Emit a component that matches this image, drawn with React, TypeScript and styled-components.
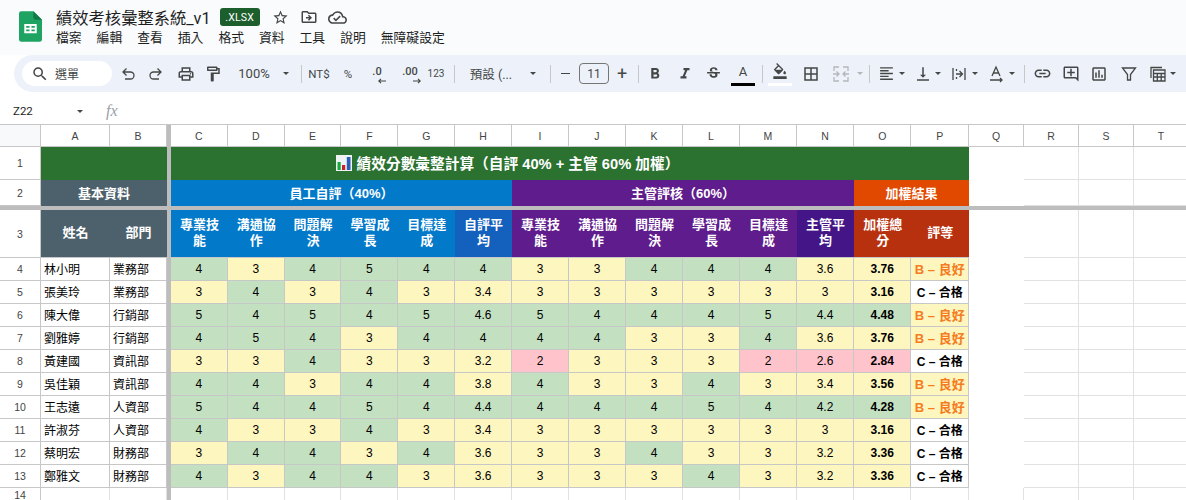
import styled, { createGlobalStyle } from 'styled-components';
import {
  MdBorderAll,
  MdFormatAlignLeft,
  MdFormatBold,
  MdFormatItalic,
  MdLink,
  MdOutlineAddComment,
  MdOutlineCloudDone,
  MdOutlineDriveFileMove,
  MdOutlineFormatColorFill,
  MdOutlineFormatPaint,
  MdOutlineInsertChart,
  MdOutlinePrint,
  MdSearch,
  MdStarBorder,
  MdStrikethroughS,
  MdVerticalAlignBottom,
} from 'react-icons/md';

const SANS = `'Liberation Sans', 'Noto Sans CJK TC', sans-serif`;

const menus = ['檔案', '編輯', '查看', '插入', '格式', '資料', '工具', '說明', '無障礙設定'];
const columns = 'ABCDEFGHIJKLMNOPQRST'.split('');
const subHeads = ['專業技能', '溝通協作', '問題解決', '學習成長', '目標達成'];
const blanks = [20, 21, 22, 23];

type Row = [string, string, number[], number[], number, boolean];

const rows: Row[] = [
  ['林小明', '業務部', [4, 3, 4, 5, 4, 4], [3, 3, 4, 4, 4, 3.6], 3.76, true],
  ['張美玲', '業務部', [3, 4, 3, 4, 3, 3.4], [3, 3, 3, 3, 3, 3], 3.16, false],
  ['陳大偉', '行銷部', [5, 4, 5, 4, 5, 4.6], [5, 4, 4, 4, 5, 4.4], 4.48, true],
  ['劉雅婷', '行銷部', [4, 5, 4, 3, 4, 4], [4, 4, 3, 3, 4, 3.6], 3.76, true],
  ['黃建國', '資訊部', [3, 3, 4, 3, 3, 3.2], [2, 3, 3, 3, 2, 2.6], 2.84, false],
  ['吳佳穎', '資訊部', [4, 4, 3, 4, 4, 3.8], [4, 3, 3, 4, 3, 3.4], 3.56, true],
  ['王志遠', '人資部', [5, 4, 4, 5, 4, 4.4], [4, 4, 4, 5, 4, 4.2], 4.28, true],
  ['許淑芬', '人資部', [4, 3, 3, 4, 3, 3.4], [3, 3, 3, 3, 3, 3], 3.16, false],
  ['蔡明宏', '財務部', [3, 4, 4, 3, 4, 3.6], [3, 3, 4, 3, 3, 3.2], 3.36, false],
  ['鄭雅文', '財務部', [4, 3, 4, 4, 3, 3.6], [3, 3, 3, 4, 3, 3.2], 3.36, false],
];

const scoreColor = (v: number) => (v >= 4 ? '#c3e0c1' : v >= 3 ? '#fdf6bf' : '#fec3cb');

const App = (): JSX.Element => {
  return (
    <Page>
      <GlobalStyle />
      <TopBar>
        <Logo viewBox="0 0 24 32">
          <path d="M2.5 0H15l9 9v20.5a2.5 2.5 0 0 1-2.5 2.5h-19A2.5 2.5 0 0 1 0 29.5V2.5A2.5 2.5 0 0 1 2.5 0z" fill="#1ea362" />
          <path d="M15 0l9 9h-6.500A2.500 2.500 0 0 1 15 6.500z" fill="#137a45" />
          <path d="M5.500 13.500h13v9.500h-13zm2 2v1.800h3.500v-1.800zm5.500 0v1.800h3.500v-1.800zm-5.500 3.700V21h3.500v-1.800zm5.500 0V21h3.500v-1.800z" fill="#fff" fillRule="evenodd" />
        </Logo>
        <TitleBlock>
          <TitleRow>
            <DocTitle>績效考核彙整系統_v1</DocTitle>
            <Badge>.XLSX</Badge>
            <TitleIcon $ml={12}><MdStarBorder size={17} /></TitleIcon>
            <TitleIcon $ml={11}><MdOutlineDriveFileMove size={18} /></TitleIcon>
            <TitleIcon $ml={10}><MdOutlineCloudDone size={19} /></TitleIcon>
          </TitleRow>
          <MenuRow>
            {menus.map((m) => (
              <MenuItem key={m}>{m}</MenuItem>
            ))}
          </MenuRow>
        </TitleBlock>
      </TopBar>

      <Toolbar>
        <SearchPill>
          <MdSearch size={18} />
          <span>選單</span>
        </SearchPill>
        <Tool $w={24} $ml={4}>
          <LineIcon viewBox="0 0 18 18">
            <path d="M7.500 3.500L4 7l3.500 3.500M4 7h7.500a3.500 3.500 0 0 1 0 7H6" />
          </LineIcon>
        </Tool>
        <Tool $w={24} $ml={4}>
          <LineIcon viewBox="0 0 18 18">
            <path d="M10.500 3.500L14 7l-3.500 3.500M14 7H6.500a3.500 3.500 0 0 0 0 7H12" />
          </LineIcon>
        </Tool>
        <Tool $w={24} $ml={6}><MdOutlinePrint size={18} /></Tool>
        <Tool $w={24} $ml={3}><MdOutlineFormatPaint size={18} /></Tool>
        <ToolText $w={34} $ml={12} $size={13}>100%</ToolText>
        <Caret $ml={12} />
        <Divider $ml={12} />
        <ToolText $w={24} $ml={5} $size={11.500}>NT$</ToolText>
        <ToolText $w={16} $ml={9} $size={11.500}>%</ToolText>
        <Decimal $w={20} $ml={12}>
          <DecimalText>.0</DecimalText>
          <ArrowIcon viewBox="0 0 8 6">
            <path d="M8 3H1M3 .8L.8 3 3 5.200" />
          </ArrowIcon>
        </Decimal>
        <Decimal $w={24} $ml={11}>
          <DecimalText>.00</DecimalText>
          <ArrowIcon viewBox="0 0 8 6">
            <path d="M0 3h7M5 .8L7.200 3 5 5.200" />
          </ArrowIcon>
        </Decimal>
        <ToolText $w={18} $ml={4} $size={10}>123</ToolText>
        <Divider $ml={9} />
        <ToolText $w={44} $ml={14} $size={12.500}>預設 (...</ToolText>
        <Caret $ml={17} />
        <Divider $ml={14} />
        <Tool $w={16} $ml={6}><Dash /></Tool>
        <SizeBox>11</SizeBox>
        <ToolText $w={16} $ml={5} $size={18}>+</ToolText>
        <Divider $ml={8} />
        <Tool $w={24} $ml={4}><MdFormatBold size={18} /></Tool>
        <Tool $w={24} $ml={6}><MdFormatItalic size={18} /></Tool>
        <Tool $w={24} $ml={4}><MdStrikethroughS size={17} /></Tool>
        <ColorTool $ml={6} $bar="#000">
          <ColorLetter>A</ColorLetter>
        </ColorTool>
        <Divider $ml={7} />
        <ColorTool $ml={5} $bar="#fff">
          <MdOutlineFormatColorFill size={16} />
        </ColorTool>
        <Tool $w={24} $ml={7}><MdBorderAll size={18} /></Tool>
        <Tool $w={24} $ml={6}>
          <MergeIcon viewBox="0 0 18 18">
            <path d="M7 2H2v4M2 12v4h5M11 2h5v4M16 12v4h-5M1 9h5M12 9h5M4.500 6.500L7 9l-2.500 2.500M13.500 6.500L11 9l2.500 2.500" />
          </MergeIcon>
        </Tool>
        <Caret $ml={4} $muted />
        <Divider $ml={6} />
        <Tool $w={20} $ml={6}><MdFormatAlignLeft size={17} /></Tool>
        <Caret $ml={3} />
        <Tool $w={20} $ml={8}><MdVerticalAlignBottom size={18} /></Tool>
        <Caret $ml={2} />
        <Tool $w={20} $ml={8}>
          <LineIcon viewBox="0 0 18 18">
            <path d="M3 3v12M15 3v12M6 9h6M9.500 6L12.500 9l-3 3M6.500 4v2M6.500 12v2" />
          </LineIcon>
        </Tool>
        <Caret $ml={3} />
        <Tool $w={20} $ml={8}>
          <LineIcon viewBox="0 0 18 18">
            <path d="M5 11l4-9 4 9M6.300 8h5.400M3 15h12M13 13l2 2-2 2" />
          </LineIcon>
        </Tool>
        <Caret $ml={3} />
        <Divider $ml={9} />
        <Tool $w={24} $ml={5}><MdLink size={19} /></Tool>
        <Tool $w={24} $ml={5}><MdOutlineAddComment size={18} /></Tool>
        <Tool $w={24} $ml={4}><MdOutlineInsertChart size={18} /></Tool>
        <Tool $w={24} $ml={6}>
          <LineIcon viewBox="0 0 18 18">
            <path d="M2.500 3h13L10.500 9.500V15h-3V9.500z" />
          </LineIcon>
        </Tool>
        <Tool $w={20} $ml={7}>
          <LineIcon viewBox="0 0 18 18">
            <path d="M2 13V2.500h11M4.500 5h11.500v11H4.500zM4.500 8.500h11.500M4.500 12h11.500M8.300 8.500V16M12.200 8.500V16" />
          </LineIcon>
        </Tool>
        <Caret $ml={2} />
      </Toolbar>

      <FormulaBar>
        <NameBox>Z22</NameBox>
        <NameCaret />
        <Fx>fx</Fx>
      </FormulaBar>

      <Sheet>
        <FreezeCol />
        <FreezeRow />

        <Corner />
        {columns.map((c, i) => (
          <ColHead key={c} $col={i < 2 ? i + 2 : i + 3}>{c}</ColHead>
        ))}

        <RowHead>1</RowHead>
        <Banner>
          <ChartEmoji viewBox="0 0 16 16">
            <rect width="16" height="16" fill="#eef2f5" />
            <rect x="1.500" y="7" width="3.200" height="8" fill="#17a83a" />
            <rect x="6" y="10" width="3.200" height="5" fill="#c8202b" />
            <rect x="10.800" y="2" width="3.700" height="13" fill="#2a5fb5" />
          </ChartEmoji>
          績效分數彙整計算（自評 40% + 主管 60% 加權）
        </Banner>
        {blanks.map((c) => <Blank key={c} $col={c} />)}

        <RowHead>2</RowHead>
        <GroupHead $from={2} $span={2} $bg="#4d616c">基本資料</GroupHead>
        <GroupHead $from={5} $span={6} $bg="#0279c9">員工自評（40%）</GroupHead>
        <GroupHead $from={11} $span={6} $bg="#5f1c8c">主管評核（60%）</GroupHead>
        <GroupHead $from={17} $span={2} $bg="#e24900">加權結果</GroupHead>
        {blanks.map((c) => <Blank key={c} $col={c} />)}

        <RowHead $row={5}>3</RowHead>
        <SubHead $col={2} $bg="#4d616c">姓名</SubHead>
        <SubHead $col={3} $bg="#4d616c">部門</SubHead>
        {subHeads.map((h, i) => (
          <SubHead key={`self-${h}`} $col={5 + i} $bg="#0279c9">{h}</SubHead>
        ))}
        <SubHead $col={10} $bg="#1360bd">自評平均</SubHead>
        {subHeads.map((h, i) => (
          <SubHead key={`boss-${h}`} $col={11 + i} $bg="#5f1c8c">{h}</SubHead>
        ))}
        <SubHead $col={16} $bg="#431586">主管平均</SubHead>
        <SubHead $col={17} $bg="#b7310f">加權總分</SubHead>
        <SubHead $col={18} $bg="#b7310f">評等</SubHead>
        {blanks.map((c) => <Blank key={c} $col={c} />)}

        {rows.map((r, i) => (
          <DataRow key={r[0]} row={r} num={i + 4} />
        ))}

        <LastRowHead>14</LastRowHead>
        {Array.from({ length: 22 }, (_, i) => i + 2)
          .filter((c) => c !== 4)
          .map((c) => (
            <LastBlank key={c} $col={c} />
          ))}
      </Sheet>
    </Page>
  );
};

const DataRow = ({ row, num }: { row: Row; num: number }): JSX.Element => {
  const [name, dept, self, boss, total, good] = row;
  return (
    <>
      <RowHead>{num}</RowHead>
      <TextCell $col={2}>{name}</TextCell>
      <TextCell $col={3}>{dept}</TextCell>
      {self.map((v, i) => (
        <ScoreCell key={`s${i}`} $col={5 + i} $bg={scoreColor(v)}>{v}</ScoreCell>
      ))}
      {boss.map((v, i) => (
        <ScoreCell key={`b${i}`} $col={11 + i} $bg={scoreColor(v)}>{v}</ScoreCell>
      ))}
      <ScoreCell $col={17} $bg={scoreColor(total)} $bold>{total.toFixed(2)}</ScoreCell>
      <GradeCell $good={good}>{good ? 'B – 良好' : 'C – 合格'}</GradeCell>
      {blanks.map((c) => <Blank key={c} $col={c} />)}
    </>
  );
};

const GlobalStyle = createGlobalStyle`
  html, body {
    margin: 0;
    padding: 0;
    width: 1186px;
    height: 500px;
    overflow: hidden;
    background: #fff;
    font-family: ${SANS};
  }
`;

const Page = styled.div`
  width: 1186px;
  height: 500px;
  overflow: hidden;
  display: flex;
  flex-direction: column;
`;
const TopBar = styled.div`
  height: 55px;
  flex: none;
  background: #f9fbfd;
  display: flex;
  padding: 11px 0 0 19px;
  box-sizing: border-box;
`;
const Logo = styled.svg`
  width: 23px;
  height: 31px;
  flex: none;
`;
const TitleBlock = styled.div`
  margin-left: 14px;
  margin-top: -11px;
  display: flex;
  flex-direction: column;
`;
const TitleRow = styled.div`
  height: 29px;
  padding-top: 5px;
  box-sizing: border-box;
  display: flex;
  align-items: center;
`;
const DocTitle = styled.div`
  font-family: Roboto, 'Noto Sans CJK TC', sans-serif;
  font-size: 16.300px;
  color: #1f1f1f;
  white-space: nowrap;
`;
const Badge = styled.div`
  margin-left: 9px;
  width: 40px;
  height: 18px;
  border-radius: 3px;
  background: #1c5e2c;
  color: #fff;
  font-family: Roboto, sans-serif;
  font-size: 10.500px;
  letter-spacing: 0.200px;
  display: flex;
  align-items: center;
  justify-content: center;
`;
const TitleIcon = styled.div<{ $ml: number }>`
  margin-left: ${(p) => p.$ml}px;
  color: #444746;
  display: flex;
`;
const MenuRow = styled.div`
  margin-top: 1px;
  display: flex;
  gap: 15px;
`;
const MenuItem = styled.div`
  font-size: 12.800px;
  line-height: 16px;
  color: #1f1f1f;
  white-space: nowrap;
`;
const Toolbar = styled.div`
  margin-left: 14px;
  height: 37px;
  flex: none;
  background: #edf2fa;
  border-radius: 19px 0 0 19px;
  display: flex;
  align-items: center;
  padding-left: 8px;
  color: #444746;
`;
const SearchPill = styled.div`
  width: 90px;
  height: 25px;
  flex: none;
  box-sizing: border-box;
  border-radius: 13px;
  background: #fff;
  display: flex;
  align-items: center;
  padding-left: 9px;
  gap: 6px;
  font-size: 12px;
  color: #444746;
`;
const Tool = styled.div<{ $w: number; $ml: number }>`
  width: ${(p) => p.$w}px;
  margin-left: ${(p) => p.$ml}px;
  flex: none;
  height: 24px;
  display: flex;
  align-items: center;
  justify-content: center;
`;
const ToolText = styled(Tool)<{ $size: number }>`
  font-size: ${(p) => p.$size}px;
  font-family: Roboto, 'Noto Sans CJK TC', sans-serif;
  white-space: nowrap;
  color: #444746;
`;
const Decimal = styled(Tool)`
  flex-direction: column;
  align-items: flex-end;
  justify-content: flex-start;
  padding-right: 2px;
  box-sizing: border-box;
`;
const DecimalText = styled.span`
  font-family: Roboto, sans-serif;
  font-weight: 500;
  font-size: 11px;
  line-height: 12px;
  margin-top: 4px;
  align-self: center;
`;
const ArrowIcon = styled.svg`
  width: 8px;
  height: 6px;
  fill: none;
  stroke: #444746;
  stroke-width: 1.100;
`;
const Caret = styled.div<{ $ml: number; $muted?: boolean }>`
  width: 0;
  height: 0;
  flex: none;
  margin-left: ${(p) => p.$ml}px;
  border: 3px solid transparent;
  border-top: 3px solid ${(p) => (p.$muted ? '#b4b7b9' : '#444746')};
  border-bottom: 0;
`;
const Divider = styled.div<{ $ml: number }>`
  width: 1px;
  height: 18px;
  flex: none;
  margin-left: ${(p) => p.$ml}px;
  background: #c7c7c7;
`;
const Dash = styled.div`
  width: 9px;
  height: 1.500px;
  background: #444746;
`;
const SizeBox = styled.div`
  width: 30px;
  height: 21px;
  flex: none;
  margin-left: 6px;
  box-sizing: border-box;
  border: 1px solid #747775;
  border-radius: 4px;
  font-family: Roboto, sans-serif;
  font-size: 12px;
  color: #444746;
  display: flex;
  align-items: center;
  justify-content: center;
`;
const ColorTool = styled.div<{ $ml: number; $bar: string }>`
  width: 24px;
  height: 24px;
  flex: none;
  margin-left: ${(p) => p.$ml}px;
  box-sizing: border-box;
  display: flex;
  justify-content: center;
  padding-top: 1px;
  border-bottom: 3px solid ${(p) => p.$bar};
  margin-top: 1px;
`;
const ColorLetter = styled.span`
  font-family: Roboto, sans-serif;
  font-size: 13px;
  line-height: 18px;
`;
const LineIcon = styled.svg`
  width: 18px;
  height: 18px;
  flex: none;
  fill: none;
  stroke: #444746;
  stroke-width: 1.300;
`;
const MergeIcon = styled(LineIcon)`
  stroke: #b4b7b9;
`;
const FormulaBar = styled.div`
  margin-top: 6px;
  height: 27px;
  flex: none;
  box-sizing: border-box;
  background: #fff;
  border-bottom: 1px solid #c7c7c7;
  display: flex;
  align-items: center;
  padding-left: 13px;
  color: #1f1f1f;
  font-size: 11.500px;
`;
const NameBox = styled.div`
  width: 64px;
  font-family: Roboto, sans-serif;
`;
const NameCaret = styled.div`
  width: 0;
  height: 0;
  border: 3px solid transparent;
  border-top: 3px solid #444746;
  border-bottom: 0;
`;
const Fx = styled.div`
  margin-left: 23px;
  font-family: 'Liberation Serif', serif;
  font-style: italic;
  font-size: 16px;
  color: #9aa0a6;
`;
const Sheet = styled.div`
  display: grid;
  grid-template-columns: 41px 69px 57px 4px repeat(6, 56.830px) repeat(6, 57px) 57.500px 57.500px repeat(5, 55px);
  grid-template-rows: 22px 33px 26px 4px 48px repeat(10, 23px) 12px;
  flex: none;
  background: #fff;
  font-family: ${SANS};
`;
const FreezeCol = styled.div`
  grid-column: 4;
  grid-row: 1 / -1;
  background: #bdbdbd;
  z-index: 1;
`;
const FreezeRow = styled.div`
  grid-column: 1 / -1;
  grid-row: 4;
  background: #bdbdbd;
  z-index: 1;
`;
const Corner = styled.div`
  grid-column: 1;
  grid-row: 1;
  background: #f8f9fa;
  border-right: 1px solid #c7c7c7;
  border-bottom: 1px solid #c7c7c7;
`;
const ColHead = styled.div<{ $col: number }>`
  grid-column: ${(p) => p.$col};
  grid-row: 1;
  background: #fff;
  border-right: 1px solid #c7c7c7;
  border-bottom: 1px solid #c7c7c7;
  color: #444;
  font-size: 10.500px;
  display: flex;
  align-items: center;
  justify-content: center;
`;
const RowHead = styled.div<{ $row?: number }>`
  grid-column: 1;
  ${(p) => (p.$row ? `grid-row: ${p.$row};` : '')}
  background: #fff;
  border-right: 1px solid #c7c7c7;
  border-bottom: 1px solid #c7c7c7;
  color: #444;
  font-size: 10.500px;
  display: flex;
  align-items: center;
  justify-content: center;
`;
const LastRowHead = styled(RowHead)`
  border-bottom: 0;
  line-height: 10px;
  padding-top: 2px;
  box-sizing: border-box;
  overflow: hidden;
`;
const Banner = styled.div`
  grid-column: 2 / span 17;
  grid-row: 2;
  background: #2b7130;
  color: #fff;
  font-weight: 700;
  font-size: 14.700px;
  padding: 0 0 3px 5px;
  box-sizing: border-box;
  display: flex;
  align-items: center;
  justify-content: center;
  white-space: nowrap;
`;
const ChartEmoji = styled.svg`
  width: 16px;
  height: 16px;
  margin-right: 5px;
  margin-top: 2px;
`;
const GroupHead = styled.div<{ $from: number; $span: number; $bg: string }>`
  grid-column: ${(p) => p.$from} / span ${(p) => p.$span};
  grid-row: 3;
  background: ${(p) => p.$bg};
  color: #fff;
  font-weight: 700;
  font-size: 13px;
  padding-bottom: 2px;
  box-sizing: border-box;
  display: flex;
  align-items: center;
  justify-content: center;
`;
const SubHead = styled.div<{ $col: number; $bg: string }>`
  grid-column: ${(p) => p.$col};
  grid-row: 5;
  background: ${(p) => p.$bg};
  border-bottom: 1px solid #c7c7c7;
  color: #fff;
  font-weight: 700;
  font-size: 13px;
  line-height: 16px;
  padding: 0 4px 2px;
  box-sizing: border-box;
  display: flex;
  align-items: center;
  justify-content: center;
  text-align: center;
`;
const Blank = styled.div<{ $col: number }>`
  grid-column: ${(p) => p.$col};
  background: #fff;
  border-right: 1px solid #e1e1e1;
  border-bottom: 1px solid #e1e1e1;
`;
const LastBlank = styled(Blank)`
  border-bottom: 0;
`;
const TextCell = styled.div<{ $col: number }>`
  grid-column: ${(p) => p.$col};
  background: #fff;
  border-right: 1px solid #c7c7c7;
  border-bottom: 1px solid #c7c7c7;
  padding: 0 0 1px 3px;
  box-sizing: border-box;
  font-size: 12px;
  color: #000;
  display: flex;
  align-items: center;
`;
const ScoreCell = styled.div<{ $col: number; $bg: string; $bold?: boolean }>`
  grid-column: ${(p) => p.$col};
  background: ${(p) => p.$bg};
  border-right: 1px solid #c7c7c7;
  border-bottom: 1px solid #c7c7c7;
  font-size: 12px;
  font-weight: ${(p) => (p.$bold ? 700 : 400)};
  color: #000;
  display: flex;
  align-items: center;
  justify-content: center;
`;
const GradeCell = styled.div<{ $good: boolean }>`
  grid-column: 18;
  background: ${(p) => (p.$good ? '#fdf6bf' : '#fff')};
  border-right: 1px solid #c7c7c7;
  border-bottom: 1px solid #c7c7c7;
  padding-bottom: 1px;
  box-sizing: border-box;
  font-size: ${(p) => (p.$good ? 13 : 12)}px;
  font-weight: 700;
  color: ${(p) => (p.$good ? '#f57c1f' : '#000')};
  white-space: nowrap;
  display: flex;
  align-items: center;
  justify-content: center;
`;

export default App;
